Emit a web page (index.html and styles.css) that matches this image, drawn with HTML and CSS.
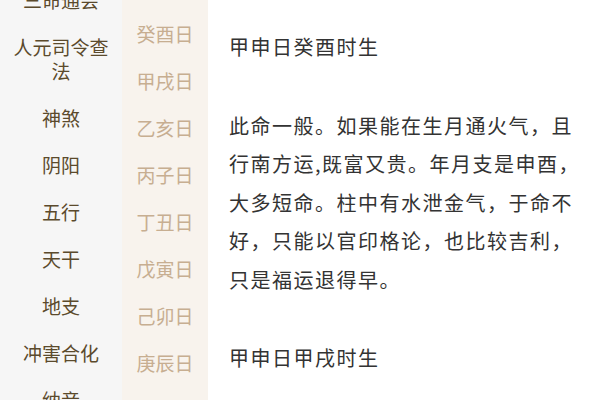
FILE: index.html
```html
<!DOCTYPE html>
<html lang="zh-CN">
<head>
<meta charset="utf-8">
<link rel="stylesheet" href="styles.css">
</head>
<body>
<div class="page">
  <nav class="cats">
    <ul class="cat-list">
      <li class="cat">三命通会</li>
      <li class="cat">人元司令查法</li>
      <li class="cat">神煞</li>
      <li class="cat">阴阳</li>
      <li class="cat">五行</li>
      <li class="cat">天干</li>
      <li class="cat">地支</li>
      <li class="cat">冲害合化</li>
      <li class="cat">纳音</li>
    </ul>
  </nav>
  <nav class="days">
    <ul class="day-list">
      <li class="day">癸酉日</li>
      <li class="day">甲戌日</li>
      <li class="day">乙亥日</li>
      <li class="day">丙子日</li>
      <li class="day">丁丑日</li>
      <li class="day">戊寅日</li>
      <li class="day">己卯日</li>
      <li class="day">庚辰日</li>
    </ul>
  </nav>
  <main class="content">
    <p class="para">甲申日癸酉时生</p>
    <p class="para">此命一般。如果能在生月通火气，且行南方运,既富又贵。年月支是申酉，大多短命。柱中有水泄金气，于命不好，只能以官印格论，也比较吉利，只是福运退得早。</p>
    <p class="para">甲申日甲戌时生</p>
  </main>
</div>
</body>
</html>
```
FILE: styles.css
```css
html, body {
  margin: 0;
  padding: 0;
  background: #ffffff;
}
body {
  font-family: "Noto Sans CJK SC", "Noto Sans", sans-serif;
  width: 600px;
  height: 400px;
  overflow: hidden;
}
.page {
  display: flex;
  height: 400px;
  overflow: hidden;
}
.cats {
  width: 122px;
  flex: none;
  background: #f6f6f6;
  overflow: hidden;
}
.cat-list {
  list-style: none;
  margin: -23.5px 0 0;
  padding: 0;
}
.cat {
  padding: 11.5px 8px;
  font-size: 19px;
  line-height: 24px;
  text-align: center;
  color: #5b4a2c;
}
.days {
  width: 86px;
  flex: none;
  background: #f8f3ed;
  overflow: hidden;
}
.day-list {
  list-style: none;
  margin: 0;
  padding: 10.5px 0 0;
}
.day {
  padding: 11.5px 0;
  font-size: 19px;
  line-height: 24px;
  text-align: center;
  color: #c7ae91;
}
.content {
  flex: 1;
  padding: 28px 12px 0 21px;
  overflow: hidden;
}
.para {
  margin: 0 0 40px;
  font-size: 20px;
  line-height: 38.5px;
  letter-spacing: 1.5px;
  color: #333333;
}
```
